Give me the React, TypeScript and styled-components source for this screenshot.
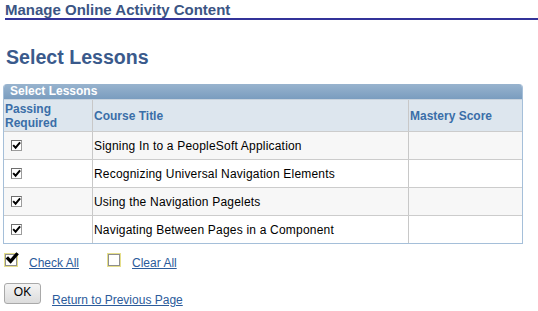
import styled, { createGlobalStyle } from "styled-components";

const GlobalStyle = createGlobalStyle`
  body {
    margin: 0;
    background: #ffffff;
    font-family: Arial, "Liberation Sans", sans-serif;
  }
`;

interface Lesson {
  title: string;
  passing: boolean;
  score: string;
}

const lessons: Lesson[] = [
  { title: "Signing In to a PeopleSoft Application", passing: true, score: "" },
  { title: "Recognizing Universal Navigation Elements", passing: true, score: "" },
  { title: "Using the Navigation Pagelets", passing: true, score: "" },
  { title: "Navigating Between Pages in a Component", passing: true, score: "" },
];

function CheckMark({ size, weight = 2 }: { size: number; weight?: number }) {
  return (
    <svg width={size} height={size} viewBox="0 0 10 10">
      <path d="M1.3 4.6 L4 7.4 L9 1.6" stroke="#000" strokeWidth={weight} fill="none" />
    </svg>
  );
}

function App() {
  return (
    <Page>
      <GlobalStyle />
      <PageHeader>Manage Online Activity Content</PageHeader>
      <PageTitle>Select Lessons</PageTitle>

      <Grid>
        <GridLabel>Select Lessons</GridLabel>
        <HeadRow>
          <HeadCell>Passing Required</HeadCell>
          <HeadCell>Course Title</HeadCell>
          <HeadCell>Mastery Score</HeadCell>
        </HeadRow>
        {lessons.map((lesson, i) => (
          <Row key={lesson.title} $odd={i % 2 === 0}>
            <Cell $box>
              <GridBox>{lesson.passing && <CheckMark size={9} weight={2.2} />}</GridBox>
            </Cell>
            <Cell>{lesson.title}</Cell>
            <Cell>{lesson.score}</Cell>
          </Row>
        ))}
      </Grid>

      <ActionRow>
        <Action>
          <BigBox>
            <BigCheck>
              <CheckMark size={14} weight={2.4} />
            </BigCheck>
          </BigBox>
          <PageLink href="#">Check All</PageLink>
        </Action>
        <Action>
          <BigBox />
          <PageLink href="#">Clear All</PageLink>
        </Action>
      </ActionRow>

      <ButtonRow>
        <OkButton>OK</OkButton>
        <PageLink href="#">Return to Previous Page</PageLink>
      </ButtonRow>
    </Page>
  );
}

const Page = styled.div`
  width: 538px;
  height: 311px;
  overflow: hidden;
  padding-top: 1px;
  box-sizing: border-box;
`;

const PageHeader = styled.div`
  margin-left: 5px;
  font-size: 15px;
  font-weight: bold;
  color: #3b5584;
  line-height: 17px;
  border-bottom: 2px solid #333399;
`;

const PageTitle = styled.h1`
  margin: 25px 0 0 6px;
  font-size: 19.6px;
  font-weight: bold;
  color: #3a5a8c;
  line-height: 24px;
`;

const Grid = styled.div`
  margin: 15px 0 0 3px;
  width: 520px;
  border: 1px solid #a5bfd9;
  border-top: none;
  border-radius: 4px 4px 0 0;
  box-sizing: border-box;
  overflow: hidden;
`;

const GridLabel = styled.div`
  height: 15px;
  line-height: 15px;
  padding-left: 6px;
  font-size: 12px;
  font-weight: bold;
  color: #ffffff;
  background: linear-gradient(#98b3ce, #7a9dbf);
`;

const HeadRow = styled.div`
  display: grid;
  grid-template-columns: 89px 316px 1fr;
  height: 32px;
  box-sizing: border-box;
  background: #dde6ee;
  border-top: 1px solid #c8d3de;
`;

const HeadCell = styled.div`
  display: flex;
  align-items: center;
  padding: 0 1px;
  color: #3a6ea8;
  font-size: 12px;
  font-weight: bold;
  line-height: 14px;
  border-right: 1px solid #c8c8c8;
  &:last-child {
    border-right: none;
  }
`;

const Row = styled.div<{ $odd: boolean }>`
  display: grid;
  grid-template-columns: 89px 316px 1fr;
  height: 28px;
  box-sizing: border-box;
  border-top: 1px solid #cccccc;
  background: ${(p) => (p.$odd ? "#f7f7f7" : "#ffffff")};
`;

const Cell = styled.div<{ $box?: boolean }>`
  display: flex;
  align-items: center;
  padding: 0 0 0 ${(p) => (p.$box ? "7px" : "1px")};
  font-size: 12px;
  color: #000000;
  letter-spacing: 0.2px;
  border-right: 1px solid #c8c8c8;
  &:last-child {
    border-right: none;
  }
`;

const GridBox = styled.span`
  display: flex;
  align-items: center;
  justify-content: center;
  width: 11px;
  height: 11px;
  margin-top: -1px;
  box-sizing: border-box;
  background: #ffffff;
  border: 1px solid #9c9c9c;
  border-top-color: #6e6e6e;
  border-left-color: #6e6e6e;
`;

const ActionRow = styled.div`
  display: flex;
  gap: 29px;
  margin: 10px 0 0 5px;
`;

const Action = styled.div`
  display: flex;
  align-items: flex-start;
  gap: 12px;
`;

const BigBox = styled.span`
  position: relative;
  display: block;
  width: 12px;
  height: 12px;
  box-sizing: border-box;
  background: #ffffff;
  border: 1px solid #8e8e8e;
  outline: 1px solid #e6df8a;
`;

const BigCheck = styled.span`
  position: absolute;
  left: -1px;
  top: -4px;
  display: flex;
`;

const PageLink = styled.a`
  margin-top: 2px;
  font-size: 12px;
  color: #2b5b9b;
  text-decoration: underline;
  line-height: 14px;
`;

const ButtonRow = styled.div`
  display: flex;
  align-items: flex-start;
  gap: 11px;
  margin: 13px 0 0 4px;
`;

const OkButton = styled.button`
  width: 37px;
  height: 21px;
  padding: 0 0 3px;
  font-family: Arial, "Liberation Sans", sans-serif;
  font-size: 12px;
  color: #000000;
  border: 1px solid #a9a9a9;
  border-radius: 3px;
  background: linear-gradient(#f4f4f4, #dcdcdc);
  & + a {
    margin-top: 10px;
  }
`;

export default App;
